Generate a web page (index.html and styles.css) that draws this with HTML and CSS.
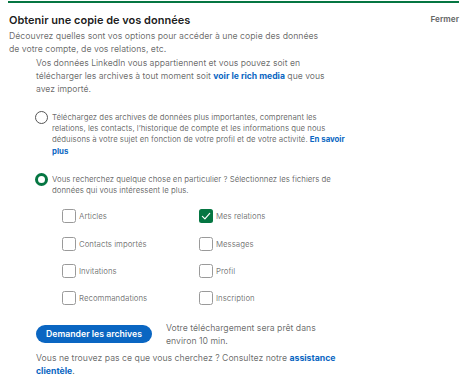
FILE: index.html
```html
<!DOCTYPE html>
<html lang="fr">
<head>
<meta charset="utf-8">
<link rel="stylesheet" href="styles.css">
</head>
<body>
<div class="page">
  <div class="topline"></div>
  <header class="head">
    <div class="head-text">
      <h1 class="title">Obtenir une copie de vos données</h1>
      <p class="subtitle">Découvrez quelles sont vos options pour accéder à une copie des données de votre compte, de vos relations, etc.</p>
    </div>
    <a class="close">Fermer</a>
  </header>

  <div class="body">
    <p class="intro">Vos données LinkedIn vous appartiennent et vous pouvez soit en télécharger les archives à tout moment soit <a class="link">voir le rich media</a> que vous avez importé.</p>

    <div class="option">
      <span class="radio"></span>
      <p class="option-text">Téléchargez des archives de données plus importantes, comprenant les relations, les contacts, l’historique de compte et les informations que nous déduisons à votre sujet en fonction de votre profil et de votre activité. <a class="link">En savoir plus</a></p>
    </div>

    <div class="option option-2">
      <span class="radio radio-on"></span>
      <p class="option-text">Vous recherchez quelque chose en particulier ? Sélectionnez les fichiers de données qui vous intéressent le plus.</p>
    </div>

    <div class="checks">
      <label class="check"><span class="box"></span>Articles</label>
      <label class="check"><span class="box box-on"><svg viewBox="0 0 14 14" width="14" height="14"><path d="M3.4 7.3 L5.9 9.8 L10.7 4.4" fill="none" stroke="#fff" stroke-width="1.2" stroke-linecap="round" stroke-linejoin="round"/></svg></span>Mes relations</label>
      <label class="check"><span class="box"></span>Contacts importés</label>
      <label class="check"><span class="box"></span>Messages</label>
      <label class="check"><span class="box"></span>Invitations</label>
      <label class="check"><span class="box"></span>Profil</label>
      <label class="check"><span class="box"></span>Recommandations</label>
      <label class="check"><span class="box"></span>Inscription</label>
    </div>

    <div class="actions">
      <button class="btn">Demander les archives</button>
      <p class="ready">Votre téléchargement sera prêt dans environ 10 min.</p>
    </div>

    <p class="help">Vous ne trouvez pas ce que vous cherchez ? Consultez notre <a class="link">assistance clientèle</a>.</p>
  </div>
</div>
</body>
</html>
```

FILE: styles.css
```css
* { box-sizing: border-box; }
html, body { margin: 0; padding: 0; background: #fff; }
body {
  font-family: Inter, "Noto Sans", "Liberation Sans", sans-serif;
  color: rgba(0,0,0,0.6);
}
.page { padding: 1px 8px 0 8px; }
.topline { height: 2px; background: #057642; }
.head {
  display: flex;
  justify-content: space-between;
  align-items: flex-start;
  padding: 10px 0 0 1px;
}
.title {
  margin: 0;
  font-size: 11px;
  font-weight: 600;
  line-height: 14px;
  color: rgba(0,0,0,0.9);
}
.subtitle {
  margin: 3px 0 0 0;
  width: 316px;
  font-size: 8.7px;
  line-height: 12.5px;
}
.close {
  font-size: 8.2px;
  font-weight: 700;
  line-height: 12px;
  color: rgba(0,0,0,0.6);
}
.body { padding-left: 28px; }
.intro {
  margin: 2px 0 0 0;
  width: 296px;
  font-size: 8.6px;
  line-height: 13px;
}
.link { color: #0a66c2; font-weight: 700; }
.option {
  display: flex;
  align-items: flex-start;
  gap: 4px;
  margin: 14.5px 0 0 -1px;
  width: 313px;
}
.option-2 { margin-top: 15.8px; }
.radio {
  flex: none;
  width: 13px;
  height: 13px;
  border-radius: 50%;
  border: 1.4px solid #555;
}
.radio-on { border: 3.6px solid #057642; }
.option-text {
  margin: 1.4px 0 0 0;
  font-size: 7.8px;
  line-height: 11.2px;
}
.checks {
  display: grid;
  grid-template-columns: 137px 137px;
  row-gap: 13.3px;
  padding-left: 26px;
  margin-top: 13.2px;
}
.check {
  display: flex;
  align-items: center;
  gap: 3px;
  font-size: 7.8px;
  height: 14px;
  color: rgba(0,0,0,0.55);
}
.box {
  flex: none;
  width: 14px;
  height: 14px;
  border: 1px solid #9a9a9a;
  border-radius: 2.5px;
}
.box-on {
  background: #057642;
  border: 0;
  display: flex;
}
.box-on svg { display: block; }
.actions {
  display: flex;
  align-items: flex-start;
  gap: 14px;
  margin-top: 16.5px;
}
.btn {
  flex: none;
  width: 116px;
  height: 18px;
  padding: 0;
  border: 0;
  border-radius: 9px;
  background: #0a66c2;
  color: #fff;
  font-family: inherit;
  font-size: 8.7px;
  font-weight: 600;
  line-height: 18px;
  margin-top: 3.5px;
}
.ready {
  margin: 0;
  width: 165px;
  font-size: 8.7px;
  line-height: 13px;
}
.help {
  margin: 4px 0 0 0;
  width: 305px;
  font-size: 8.7px;
  line-height: 13px;
}
```
